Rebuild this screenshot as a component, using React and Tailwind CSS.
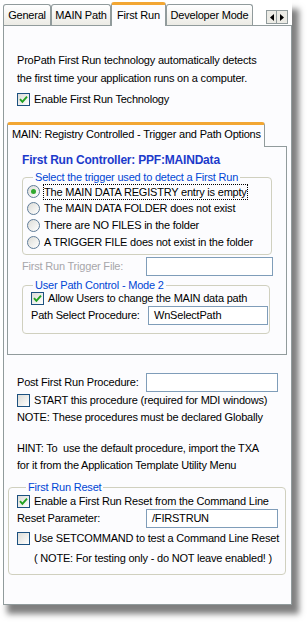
import React from "react";

const Check = ({ checked }) => (
  <span className="w-[13px] h-[13px] border border-[#1c5180] bg-linear-to-br from-[#dcdcd7] to-white flex items-center justify-center shrink-0">
    {checked && (
      <svg width="9" height="9" viewBox="0 0 9 9">
        <path d="M1 4.2 L3.4 6.8 L8 1.6" stroke="#21a121" strokeWidth="1.9" fill="none" />
      </svg>
    )}
  </span>
);

const Radio = ({ checked }) => (
  <span className="w-[13px] h-[13px] rounded-full border border-[#5f7c99] bg-linear-to-br from-[#dcdcd7] to-white flex items-center justify-center shrink-0">
    {checked && <span className="w-[5px] h-[5px] rounded-full bg-[#2fa82f]" />}
  </span>
);

const Field = ({ value, w }) => (
  <div className={`h-[19px] border border-[#7f9db9] bg-white px-[5px] leading-[17px] shrink-0 ${w}`}>{value}</div>
);

const Tab = ({ label, w, active }) =>
  active ? (
    <div className={`relative z-10 h-[24px] mb-[-1px] ${w} bg-[#fcfcfe] border border-b-0 border-[#919b9c] rounded-t-[3px] border-t-[3px] border-t-[#f2a633] flex items-start justify-center pt-[2px]`}>
      {label}
    </div>
  ) : (
    <div className={`h-[21px] ${w} bg-linear-to-b from-white to-[#ecebe5] border border-b-0 border-[#919b9c] rounded-t-[3px] flex items-center justify-center`}>
      {label}
    </div>
  );

export default function App() {
  const radios = [
    "The MAIN DATA REGISTRY entry is empty",
    "The MAIN DATA FOLDER does not exist",
    "There are NO FILES in the folder",
    "A TRIGGER FILE does not exist in the folder",
  ];

  return (
    <div className="min-h-screen bg-white font-['Liberation_Sans',Arial,sans-serif] text-[11px] tracking-[-0.2px] text-black whitespace-nowrap">
      <div className="w-[292px] h-[605px] bg-white shadow-[7px_9px_6px_rgba(0,0,0,0.5)] pl-[3px] pt-[2px]">
        {/* tab strip */}
        <div className="flex items-end h-[23px]">
          <Tab label="General" w="w-[48px]" />
          <Tab label="MAIN Path" w="w-[60px]" />
          <Tab label="First Run" w="w-[55px]" active />
          <Tab label="Developer Mode" w="w-[87px]" />
          <div className="ml-auto mr-[4px] mb-[1px] flex border border-[#919b9c] bg-[#ecebe5]">
            <div className="w-[10px] h-[12px] flex items-center justify-center border-r border-[#919b9c]">
              <svg width="4" height="7" viewBox="0 0 4 7"><path d="M4 0 L0 3.5 L4 7Z" fill="#000" /></svg>
            </div>
            <div className="w-[10px] h-[12px] flex items-center justify-center">
              <svg width="4" height="7" viewBox="0 0 4 7"><path d="M0 0 L4 3.5 L0 7Z" fill="#000" /></svg>
            </div>
          </div>
        </div>

        {/* main panel */}
        <div className="w-[289px] h-[580px] border border-[#919b9c] bg-[#fcfcfe]">
          <div className="pt-[25px] pl-[13px] leading-[18px]">
            <p>ProPath First Run technology automatically detects</p>
            <p>the first time your application runs on a computer.</p>
          </div>
          <div className="mt-[4px] h-[17px] pl-[13px] flex items-center gap-[4px]">
            <Check checked />
            <span>Enable First Run Technology</span>
          </div>

          {/* inner tab */}
          <div className="mt-[14px] ml-[3px]">
            <div className="relative z-10 w-[258px] h-[25px] mb-[-1px] bg-[#fcfcfe] border border-b-0 border-[#919b9c] border-t-[3px] border-t-[#f2a633] rounded-t-[3px] pl-[4px] leading-[19px]">
              MAIN: Registry Controlled - Trigger and Path Options
            </div>
            <div className="w-[280px] h-[209px] border border-[#919b9c] bg-[#fcfcfe]">
              <div className="pt-[5px] pl-[14px] h-[23px] leading-[17px] text-[12px] font-bold text-[#1c3acb]">
                First Run Controller: PPF:MAINData
              </div>

              <fieldset className="ml-[14px] mt-[1px] w-[250px] border border-[#d0d0bf] rounded-[4px] pl-[4px] pb-[3px]">
                <legend className="ml-[6px] px-[2px] leading-[12px] text-[#0046d5]">Select the trigger used to detect a First Run</legend>
                {radios.map((r, i) => (
                  <div key={r} className="h-[17px] flex items-center gap-[4px]">
                    <Radio checked={i === 0} />
                    <span className={i === 0 ? "outline-1 outline-dotted outline-black leading-[14px]" : ""}>{r}</span>
                  </div>
                ))}
              </fieldset>

              <div className="mt-[2px] ml-[14px] h-[19px] flex items-center">
                <span className="w-[124px] text-[#a7a6aa]">First Run Trigger File:</span>
                <Field value="" w="w-[127px]" />
              </div>

              <fieldset className="ml-[14px] mt-[3px] w-[248px] border border-[#d0d0bf] rounded-[4px] pl-[8px] pb-[8px]">
                <legend className="ml-[2px] px-[2px] leading-[12px] text-[#0046d5]">User Path Control - Mode 2</legend>
                <div className="h-[15px] flex items-center gap-[4px]">
                  <Check checked />
                  <span>Allow Users to change the MAIN data path</span>
                </div>
                <div className="h-[19px] flex items-center">
                  <span className="w-[117px]">Path Select Procedure:</span>
                  <Field value="WnSelectPath" w="w-[120px]" />
                </div>
              </fieldset>
            </div>
          </div>

          {/* below inner tab */}
          <div className="pl-[13px]">
            <div className="mt-[18px] h-[19px] flex items-center">
              <span className="w-[129px]">Post First Run Procedure:</span>
              <Field value="" w="w-[132px]" />
            </div>
            <div className="h-[17px] flex items-center gap-[4px]">
              <Check />
              <span>START this procedure (required for MDI windows)</span>
            </div>
            <div className="h-[17px] leading-[17px]">NOTE: These procedures must be declared Globally</div>
            <div className="mt-[14px] leading-[17px]">
              <p>HINT: To&nbsp; use the default procedure, import the TXA</p>
              <p>for it from the Application Template Utility Menu</p>
            </div>
          </div>

          <fieldset className="ml-[4px] mt-[7px] w-[278px] border border-[#d0d0bf] rounded-[4px] pl-[8px] pb-[6px]">
            <legend className="ml-[9px] px-[2px] leading-[12px] text-[#0046d5]">First Run Reset</legend>
            <div className="h-[16px] flex items-center gap-[4px]">
              <Check checked />
              <span>Enable a First Run Reset from the Command Line</span>
            </div>
            <div className="h-[19px] flex items-center">
              <span className="w-[129px]">Reset Parameter:</span>
              <Field value="/FIRSTRUN" w="w-[132px]" />
            </div>
            <div className="h-[20px] flex items-center gap-[4px]">
              <Check />
              <span>Use SETCOMMAND to test a Command Line Reset</span>
            </div>
            <div className="h-[20px] leading-[20px] pl-[17px]">( NOTE: For testing only - do NOT leave enabled! )</div>
          </fieldset>
        </div>
      </div>
    </div>
  );
}
